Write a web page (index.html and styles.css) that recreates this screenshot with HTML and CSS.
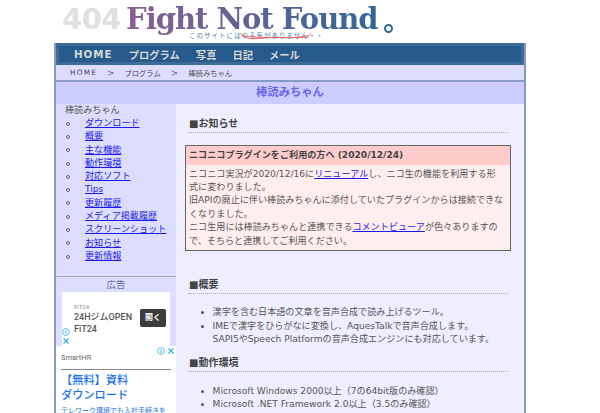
FILE: index.html
```html
<!DOCTYPE html>
<html lang="ja">
<head>
<meta charset="utf-8">
<title>棒読みちゃん</title>
<link rel="stylesheet" href="styles.css">
</head>
<body>
<div class="page">
  <header class="logo">
    <span class="logo-404">404</span>
    <span class="logo-title">Fight Not Found</span><span class="logo-dot"></span>
    <div class="logo-sub">このサイトにはやる気がありません・・
      <svg class="scribble" viewBox="0 0 73 10" width="73" height="10"><path d="M1 1C4 6 10 8 24 6S48 7 60 5S70 4 72 1M3 4C20 6 50 6 70 5" fill="none" stroke="#e66a6a" stroke-width="1"/></svg>
    </div>
  </header>
  <div class="frame">
    <nav class="nav">
      <a>HOME</a><a>プログラム</a><a>写真</a><a>日記</a><a>メール</a>
    </nav>
    <div class="crumbs">
      <span class="latin">HOME</span><i>&gt;</i><span>プログラム</span><i>&gt;</i><span class="here">棒読みちゃん</span>
    </div>
    <h1 class="page-title">棒読みちゃん</h1>
    <div class="columns">
      <aside class="side">
        <div class="side-head">棒読みちゃん</div>
        <ul class="side-list">
          <li><a href="#">ダウンロード</a></li>
          <li><a href="#">概要</a></li>
          <li><a href="#">主な機能</a></li>
          <li><a href="#">動作環境</a></li>
          <li><a href="#">対応ソフト</a></li>
          <li><a href="#">Tips</a></li>
          <li><a href="#">更新履歴</a></li>
          <li><a href="#">メディア掲載履歴</a></li>
          <li><a href="#">スクリーンショット</a></li>
          <li><a href="#">お知らせ</a></li>
          <li><a href="#">更新情報</a></li>
        </ul>
        <div class="ad-head">広告</div>
        <div class="ad-one">
          <div class="ad-one-text">
            <small>FiT24</small>
            <b>24HジムOPEN</b>
            <b>FiT24</b>
          </div>
          <span class="ad-btn">開く</span>
          <span class="ad-marks">
            <svg viewBox="0 0 8 8" width="8" height="8"><circle cx="4" cy="4" r="3.4" fill="none" stroke="#2bb3e0" stroke-width=".8"/><path d="M4 3.3V6M4 2v.8" stroke="#2bb3e0" stroke-width="1"/></svg>
            <svg viewBox="0 0 8 8" width="8" height="8"><path d="M1.5 1.5l5 5M6.500 1.500l-5 5" stroke="#2bb3e0" stroke-width="1.200"/></svg>
          </span>
        </div>
        <div class="ad-two">
          <div class="ad-two-top"><span>SmartHR</span></div>
          <span class="ad-marks-two">
            <svg viewBox="0 0 8 8" width="8" height="8"><circle cx="4" cy="4" r="3.4" fill="none" stroke="#2bb3e0" stroke-width=".8"/><path d="M4 3.3V6M4 2v.8" stroke="#2bb3e0" stroke-width="1"/></svg>
            <svg viewBox="0 0 8 8" width="8" height="8"><path d="M1.500 1.500l5 5M6.500 1.500l-5 5" stroke="#2bb3e0" stroke-width="1.200"/></svg>
          </span>
          <div class="ad-two-big">【無料】資料<br>ダウンロード</div>
          <div class="ad-two-small">テレワーク環境でも入社手続きを</div>
        </div>
      </aside>
      <main class="main">
        <h2 class="sec first">■お知らせ</h2>
        <section class="notice">
          <h3>ニコニコプラグインをご利用の方へ (2020/12/24)</h3>
          <p>ニコニコ実況が2020/12/16に<a href="#">リニューアル</a>し、ニコ生の機能を利用する形<br>式に変わりました。<br>旧APIの廃止に伴い棒読みちゃんに添付していたプラグインからは接続できな<br>くなりました。<br>ニコ生用には棒読みちゃんと連携できる<a href="#">コメントビューア</a>が色々ありますの<br>で、そちらと連携してご利用ください。</p>
        </section>
        <h2 class="sec">■概要</h2>
        <ul class="bul">
          <li>漢字を含む日本語の文章を音声合成で読み上げるツール。</li>
          <li>IMEで漢字をひらがなに変換し、AquesTalkで音声合成します。<br>SAPI5やSpeech Platformの音声合成エンジンにも対応しています。</li>
        </ul>
        <h2 class="sec next">■動作環境</h2>
        <ul class="bul">
          <li>Microsoft Windows 2000以上（7の64bit版のみ確認）</li>
          <li>Microsoft .NET Framework 2.0以上（3.5のみ確認）</li>
        </ul>
      </main>
    </div>
  </div>
</div>
</body>
</html>
```

FILE: styles.css
```css
html, body { margin: 0; padding: 0; height: 413px; overflow: hidden; background: #fff; }
body { font-family: "DejaVu Sans", "Noto Sans CJK JP", sans-serif; font-size: 9.1px; color: #555; }
.page { width: 472px; margin-left: 54px; }
.logo { position: relative; height: 43px; box-sizing: border-box; padding: 0 0 0 8px; display: flex; align-items: flex-start; white-space: nowrap; }
.logo-404 { font: bold 29px/38px "DejaVu Sans", sans-serif; color: #e0e0e0; margin-right: 5px; letter-spacing: -0.5px; }
.logo-title { font: bold 29px/38px "DejaVu Serif", serif; background: linear-gradient(90deg, #8c5f92, #2f6797); -webkit-background-clip: text; background-clip: text; color: transparent; letter-spacing: -1px; }
.logo-dot { width: 5px; height: 5px; border: 2px solid #2e6b9c; border-radius: 50%; margin: 24px 0 0 6px; }
.logo-sub { position: absolute; left: 135px; top: 31px; font-size: 6.5px; line-height: 10px; letter-spacing: 1px; color: #4f7fa8; }
.scribble { position: absolute; left: 50px; top: 1px; }
.frame { border: 2px solid #8899c4; border-width: 0 2px; background: #eeeeff; }
.nav { background: #255a8a; border: 3px solid #3d6c99; box-sizing: border-box; height: 22px; padding-left: 15px; display: flex; gap: 16px; align-items: center; }
.nav a { color: #d8d8d8; font-weight: bold; font-size: 10.3px; }
.nav a:first-child { letter-spacing: 1px; }
.crumbs { background: #ddddff; height: 15px; border-bottom: 2px solid #8899c4; padding-left: 14px; display: flex; align-items: center; font-size: 7.3px; color: #446; }
.crumbs i { font-style: normal; margin: 0 10px; color: #667; font-size: 9px; }
.crumbs .latin { letter-spacing: 1.2px; }
.crumbs .here { color: #555; }
.page-title { margin: 0; background: #ccccff; color: #6666ee; font-size: 11.3px; font-weight: bold; text-align: center; height: 22px; line-height: 22px; }
.columns { display: flex; height: 309px; overflow: hidden; }
.side { width: 120px; flex: none; background: #ddddff; }
.side-head { padding-left: 9px; padding-top: 1px; line-height: 11px; }
.side-list { margin: 1px 0 13px; padding: 0 0 0 10px; list-style: none; }
.side-list li { display: flex; align-items: center; gap: 15px; line-height: 13.3px; height: 13.3px; color: #667; }
.side-list li::before { content: ""; width: 2px; height: 2px; border: 1px solid #667; border-radius: 50%; }
.side-list a { color: #1a1aee; }
.main { flex: 1; padding: 0 13px 0 9px; min-width: 0; }
.sec { margin: 0 3px; font-size: 10px; font-weight: bold; color: #444; padding: 2px 0 0 1px; border-bottom: 1px dotted #aaa; line-height: 16px; }
.sec.first { margin-top: 10px; }
.notice { border: 1px solid #666; margin: 12px 0 0; background: #ffeeee; }
.notice h3 { margin: 0; background: #ffcccc; font-size: 9.1px; line-height: 18.5px; padding: 0 3px; color: #444; font-weight: bold; }
.notice p { margin: 0; padding: 3px 3px 2px; line-height: 13.4px; white-space: nowrap; }
.notice a { color: #1a1aee; }
.notice + .sec { margin-top: 24px; }
.bul { margin: 0; padding: 12.5px 0 0 27.6px; line-height: 13.4px; white-space: nowrap; }
.sec.next { margin-top: 6.5px; }
.ad-head { border-top: 1px solid #aaa; text-align: center; color: #6666aa; font-size: 9.5px; line-height: 15px; }
.ad-one { position: relative; margin: 0 6px 0 6px; height: 54px; background: #fff; padding: 11px 0 0 12px; box-sizing: border-box; display: flex; color: #555; font-family: Roboto, "Noto Sans CJK JP", sans-serif; }
.ad-one-text { display: flex; flex-direction: column; font-size: 9px; line-height: 12px; }
.ad-one-text b { font-weight: 500; }
.ad-one-text small { font-size: 6px; line-height: 7px; color: #888; margin-bottom: 1px; }
.ad-btn { position: absolute; right: 4px; top: 17px; background: #3c3c3c; color: #fff; font-size: 8px; font-weight: bold; border-radius: 2px; padding: 2px 5px; line-height: 14px; }
.ad-marks { position: absolute; left: 0; bottom: 1px; display: flex; flex-direction: column; gap: 1px; }
.ad-two { position: relative; height: 70px; margin-left: -1px; background: #fff; padding: 0 5px 0 6px; overflow: hidden; box-sizing: border-box; font-family: Roboto, "Noto Sans CJK JP", sans-serif; }
.ad-two-top { font-size: 7.5px; color: #666; line-height: 7px; padding: 8px 0 8px; border-bottom: 1px solid #888; }
.ad-marks-two { position: absolute; right: 1px; top: 1px; display: flex; gap: 2px; }
.ad-two-big { color: #1a73e8; font-size: 11.2px; line-height: 15px; margin-top: 3px; font-weight: 500; }
.ad-two-small { color: #1a73e8; font-size: 7px; line-height: 9px; margin-top: 4px; white-space: nowrap; }
```
